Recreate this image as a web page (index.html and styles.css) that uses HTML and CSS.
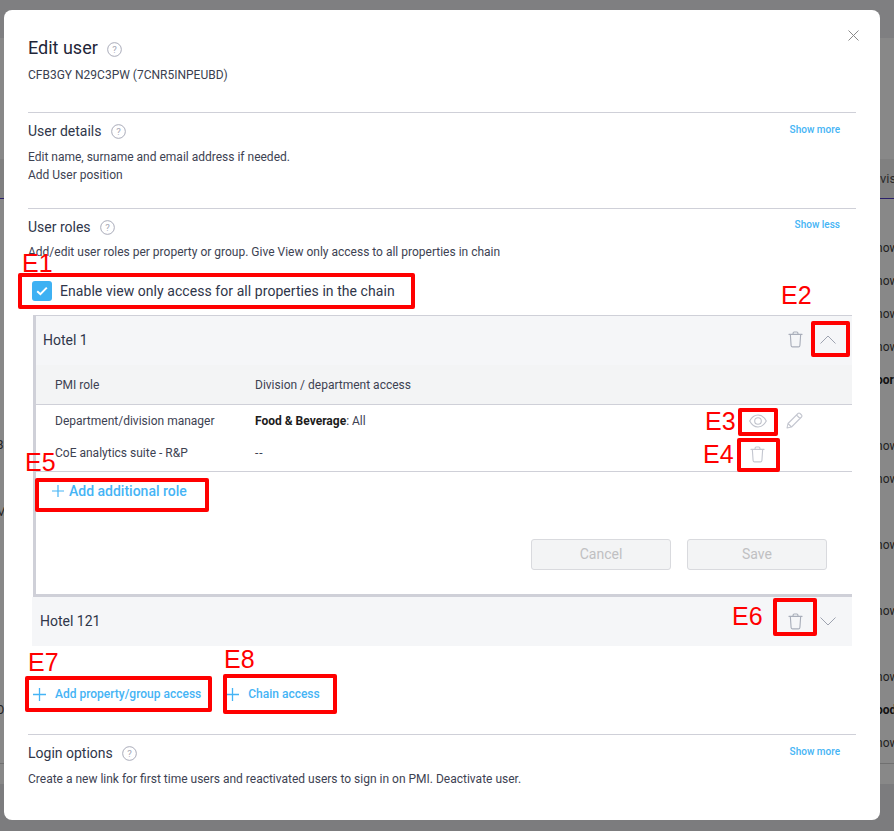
FILE: index.html
```html
<!DOCTYPE html>
<html lang="en">
<head>
<meta charset="utf-8">
<title>Edit user</title>
<link rel="stylesheet" href="styles.css">
</head>
<body>
<svg width="0" height="0" class="defs">
  <symbol id="trash" viewBox="0 0 16 18"><path d="M1 3.500h14M5.400 3.400V2.200c0-.7.5-1.200 1.200-1.200h2.800c.7 0 1.200.5 1.200 1.200v1.200M2.500 3.600l.8 11.800c.1.900.7 1.500 1.500 1.500h6.400c.8 0 1.400-.6 1.500-1.500l.8-11.800" fill="none" stroke="currentColor" stroke-width="1.200" stroke-linecap="round" stroke-linejoin="round"/></symbol>
  <symbol id="help" viewBox="0 0 14 14"><circle cx="7" cy="7" r="6.400" fill="none" stroke="currentColor" stroke-width=".9"/><text x="7" y="10" text-anchor="middle" font-size="9" font-family="Roboto" fill="currentColor">?</text></symbol>
  <symbol id="plus" viewBox="0 0 12 12"><path d="M6 0v12M0 6h12" fill="none" stroke="currentColor" stroke-width="1.200"/></symbol>
</svg>

<div class="backdrop">
  <div class="bd-top"></div>
  <div class="bd-tab"><span class="bd-vis">vis</span></div>
  <span class="frag fn1">now</span><span class="frag fn2">now</span><span class="frag fn3">now</span><span class="frag fn4">now</span>
  <span class="frag fb1">oor</span><span class="frag fn5">now</span><span class="frag fn6">now</span>
  <span class="frag fn7">now</span><span class="frag fn8">now</span><span class="frag fn9">now</span><span class="frag fb2">ood</span><span class="frag fn10">now</span>
  <span class="frag fl1">B</span><span class="frag fl2">M</span><span class="frag fl3">O</span>
  <div class="bd-line"></div>
  <div class="bd-bottom"></div>
</div>

<main class="modal">
  <button class="close" aria-label="Close"><svg width="11" height="11" viewBox="0 0 11 11"><path d="M.5.500l10 10M10.500.500l-10 10" stroke="currentColor" stroke-width="1" fill="none"/></svg></button>

  <header class="modal-head">
    <div class="title-row"><h1>Edit user</h1><svg class="help"><use href="#help"/></svg></div>
    <p class="subtitle">CFB3GY N29C3PW (7CNR5INPEUBD)</p>
  </header>

  <section class="section details">
    <div class="sec-head"><h2>User details</h2><svg class="help"><use href="#help"/></svg><a class="toggle">Show more</a></div>
    <p class="desc first">Edit name, surname and email address if needed.</p>
    <p class="desc">Add User position</p>
  </section>

  <section class="section roles">
    <div class="sec-head"><h2>User roles</h2><svg class="help"><use href="#help"/></svg><a class="toggle">Show less</a></div>
    <p class="desc first">Add/edit user roles per property or group. Give View only access to all properties in chain</p>
    <label class="check-row">
      <span class="checkbox"><svg width="12" height="10" viewBox="0 0 12 10"><path d="M1.200 5.200l3.200 3L10.800 1.600" fill="none" stroke="#fff" stroke-width="2"/></svg></span>
      <span>Enable view only access for all properties in the chain</span>
    </label>

    <div class="hotel open">
      <div class="hotel-head">
        <span class="hotel-name">Hotel 1</span>
        <span class="head-icons">
          <svg class="ico-trash"><use href="#trash"/></svg>
          <svg class="ico-chev" viewBox="0 0 16 9"><path d="M.5 8.500L8 1l7.500 7.500" fill="none" stroke="currentColor" stroke-width="1"/></svg>
        </span>
      </div>
      <div class="role-table">
        <div class="role-row thead"><span class="c1">PMI role</span><span class="c2">Division / department access</span></div>
        <div class="role-row r1">
          <span class="c1">Department/division manager</span><span class="c2"><b>Food &amp; Beverage</b>: All</span>
          <span class="row-icons">
            <svg class="ico-eye" viewBox="0 0 18 14"><path d="M.7 7C2.800 3 5.700 1 9 1s6.200 2 8.300 6c-2.100 4-5 6-8.300 6S2.800 11 .7 7z" fill="none" stroke="currentColor" stroke-width="1.100"/><circle cx="9" cy="7" r="3.300" fill="none" stroke="currentColor" stroke-width="1.100"/></svg>
            <svg class="ico-pen" viewBox="0 0 17 17"><path d="M1 16l1-4.500L12 1.500c.6-.6 1.400-.6 2 0l1.500 1.500c.6.6.6 1.400 0 2L5.500 15 1 16zM2 11.500L5.500 15M10.500 3l3.500 3.500" fill="none" stroke="currentColor" stroke-width="1.100" stroke-linejoin="round"/></svg>
          </span>
        </div>
        <div class="role-row r2">
          <span class="c1">CoE analytics suite - R&amp;P</span><span class="c2 dash">--</span>
          <span class="row-icons trash-cell"><svg class="ico-trash small"><use href="#trash"/></svg></span>
        </div>
      </div>
      <a class="add-role"><svg class="plus"><use href="#plus"/></svg>Add additional role</a>
      <div class="actions"><button disabled>Cancel</button><button disabled>Save</button></div>
    </div>

    <div class="hotel-head closed">
      <span class="hotel-name">Hotel 121</span>
      <span class="head-icons">
        <svg class="ico-trash"><use href="#trash"/></svg>
        <svg class="ico-chev" viewBox="0 0 16 9"><path d="M.5.500L8 8l7.500-7.500" fill="none" stroke="currentColor" stroke-width="1"/></svg>
      </span>
    </div>

    <div class="add-links">
      <a class="add-prop"><svg class="plus"><use href="#plus"/></svg>Add property/group access</a>
      <a class="add-chain"><svg class="plus"><use href="#plus"/></svg>Chain access</a>
    </div>
  </section>

  <section class="section login">
    <div class="sec-head"><h2>Login options</h2><svg class="help"><use href="#help"/></svg><a class="toggle">Show more</a></div>
    <p class="desc first">Create a new link for first time users and reactivated users to sign in on PMI. Deactivate user.</p>
  </section>
</main>

<div class="mark m1"></div><span class="tag t1">E1</span>
<div class="mark m2"></div><span class="tag t2">E2</span>
<div class="mark m3"></div><span class="tag t3">E3</span>
<div class="mark m4"></div><span class="tag t4">E4</span>
<div class="mark m5"></div><span class="tag t5">E5</span>
<div class="mark m6"></div><span class="tag t6">E6</span>
<div class="mark m7"></div><span class="tag t7">E7</span>
<div class="mark m8"></div><span class="tag t8">E8</span>
</body>
</html>
```
FILE: styles.css
```css
* { box-sizing: border-box; }
html, body { margin: 0; height: 831px; overflow: hidden; }
body { position: relative; background: #7c7c7e; font-family: Roboto, "Noto Sans", sans-serif; color: #33384a; }
.defs { position: absolute; }
p, h1, h2 { margin: 0; font-weight: 400; }

.backdrop { position: absolute; inset: 0; background: #888; overflow: hidden; }
.bd-top { position: absolute; left: 0; right: 0; top: 0; height: 38px; background: #7f7f81; }
.bd-tab { position: absolute; left: 0; right: 0; top: 159px; height: 40px; background: #808080; border-bottom: 1px solid #2a1f6a; }
.bd-vis { position: absolute; left: 880px; top: 12px; font-size: 13px; color: #2c2c2c; }
.bd-line { position: absolute; left: 0; right: 0; top: 763px; height: 1px; background: #707070; }
.bd-bottom { position: absolute; left: 0; right: 0; top: 784px; bottom: 0; background: #7c7c7e; }
.frag { position: absolute; left: 876px; font-size: 12px; color: #222; white-space: nowrap; }
.fn1 { top: 241px; } .fn2 { top: 274px; } .fn3 { top: 307px; } .fn4 { top: 340px; }
.fb1 { top: 373px; font-weight: 700; color: #111; }
.fn5 { top: 439px; } .fn6 { top: 472px; } .fn7 { top: 538px; } .fn8 { top: 604px; }
.fn9 { top: 670px; } .fb2 { top: 703px; font-weight: 700; color: #111; } .fn10 { top: 736px; }
.fl1, .fl2, .fl3 { left: -4px; }
.fl1 { top: 438px; } .fl2 { top: 505px; } .fl3 { top: 703px; }

.modal { position: absolute; left: 4px; top: 10px; width: 876px; height: 810px; background: #fff; border-radius: 8px; padding: 28px 24px 0; }
.close { position: absolute; right: 21px; top: 20px; padding: 0; border: 0; background: none; color: #8a8a8a; display: flex; }

.title-row { display: flex; align-items: center; gap: 9px; height: 22px; }
h1 { font-size: 18px; line-height: 22px; margin-bottom: 2px; color: #1f2639; }
.help { width: 15px; height: 15px; color: #a5a8b6; flex: none; }
.subtitle { font-size: 12px; line-height: 16px; margin-top: 7px; color: #3a3f50; }

.section { border-top: 1px solid #cfd0d8; }
.details { margin-top: 29px; height: 96px; padding-top: 8px; }
.roles { height: 526px; padding-top: 8px; }
.login { padding-top: 8px; }

.sec-head { display: flex; align-items: center; gap: 9px; height: 20px; padding-right: 16px; }
h2 { font-size: 14px; line-height: 20px; color: #30364a; }
.toggle { margin-left: auto; margin-bottom: 3px; font-size: 10px; font-weight: 500; color: #45b4f5; }
.roles .toggle { margin-bottom: 5px; }
.desc { font-size: 12px; line-height: 18px; color: #3d4252; }
.desc.first { margin-top: 7px; }
.roles .desc.first { margin-top: 6px; }

.check-row { display: flex; align-items: center; gap: 8px; font-size: 14px; letter-spacing: .06px; line-height: 20px; color: #30364a; margin: 20px 0 0 4px; height: 20px; }
.checkbox { width: 20px; height: 20px; border-radius: 3px; background: #3eb1f3; display: flex; align-items: center; justify-content: center; }

.hotel { margin: 14px 4px 0 5px; border-left: 3px solid #cfd0d8; border-top: 1px solid #cfd0d8; border-bottom: 3px solid #cfd0d8; height: 282px; }
.hotel-head { display: flex; align-items: center; justify-content: space-between; height: 49px; background: #f5f6f8; padding: 0 16px 0 7px; }
.hotel-name { font-size: 14px; color: #30364a; margin-bottom: 2px; }
.head-icons { display: flex; align-items: center; gap: 17px; padding-bottom: 2px; }
.ico-trash { width: 15px; height: 17px; color: #a9aeba; }
.ico-trash.small { width: 15px; height: 17px; color: #c4c7d0; }
.ico-chev { width: 16px; height: 9px; color: #9ea3b0; }

.role-row { display: flex; align-items: center; font-size: 12px; padding-left: 19px; position: relative; color: #3d4252; }
.role-row .c1 { width: 200px; }
.thead { height: 40px; background: #f3f4f5; border-bottom: 1px solid #cfd0d8; padding-top: 1px; }
.r1 { height: 33px; padding-bottom: 1px; }
.r1 b { font-weight: 700; color: #1c1c1c; }
.r2 { height: 34px; padding-bottom: 3px; border-bottom: 1px solid #cfd0d8; }
.dash { letter-spacing: 1px; }
.row-icons { position: absolute; left: 713px; top: 0; bottom: 0; display: flex; align-items: center; gap: 19px; }
.trash-cell { left: 714px; bottom: 1px; }
.r1 .row-icons { bottom: 2px; }
.ico-eye { width: 18px; height: 14px; color: #bfc2cb; }
.ico-pen { width: 17px; height: 17px; color: #c4c7d0; }

.add-role { display: inline-flex; align-items: center; gap: 5px; margin: 9px 0 0 16px; font-size: 14px; font-weight: 500; line-height: 20px; color: #45b4f5; }
.plus { width: 12px; height: 12px; color: #45b4f5; }

.actions { display: flex; justify-content: flex-end; gap: 16px; margin: 38px 25px 0 0; }
.actions button { width: 140px; height: 31px; padding: 0 0 2px; border: 1px solid #d9dade; border-radius: 3px; background: #f3f4f5; color: #c0c0c2; font: 400 14px Roboto, sans-serif; }

.hotel-head.closed { margin: 0 4px 0 4px; height: 49px; padding: 0 16px 0 8px; }
.closed .head-icons { padding-bottom: 0; }

.add-links { display: flex; margin: 40px 0 0 5px; }
.add-links a { display: inline-flex; align-items: center; font-size: 12px; font-weight: 500; line-height: 16px; color: #45b4f5; }
.add-links .plus { width: 13px; height: 13px; }
.add-prop { gap: 9px; }
.add-chain { gap: 9px; margin-left: 25px; }

.mark { position: absolute; border: 4px solid #f00; border-radius: 2px; }
.m1 { left: 18px; top: 273px; width: 397px; height: 36px; }
.m2 { left: 811px; top: 321px; width: 39px; height: 36px; }
.m3 { left: 738px; top: 408px; width: 40px; height: 28px; }
.m4 { left: 737px; top: 438px; width: 43px; height: 34px; }
.m5 { left: 35px; top: 478px; width: 174px; height: 34px; }
.m6 { left: 773px; top: 598px; width: 44px; height: 38px; }
.m7 { left: 25px; top: 676px; width: 187px; height: 36px; }
.m8 { left: 223px; top: 674px; width: 114px; height: 40px; }
.tag { position: absolute; font: 400 25px/26px "Liberation Sans", sans-serif; color: #f00; }
.t1 { left: 22px; top: 250px; }
.t2 { left: 781px; top: 282px; }
.t3 { left: 705px; top: 408px; }
.t4 { left: 703px; top: 441px; }
.t5 { left: 25px; top: 449px; }
.t6 { left: 732px; top: 603px; }
.t7 { left: 28px; top: 649px; }
.t8 { left: 224px; top: 646px; }
```
